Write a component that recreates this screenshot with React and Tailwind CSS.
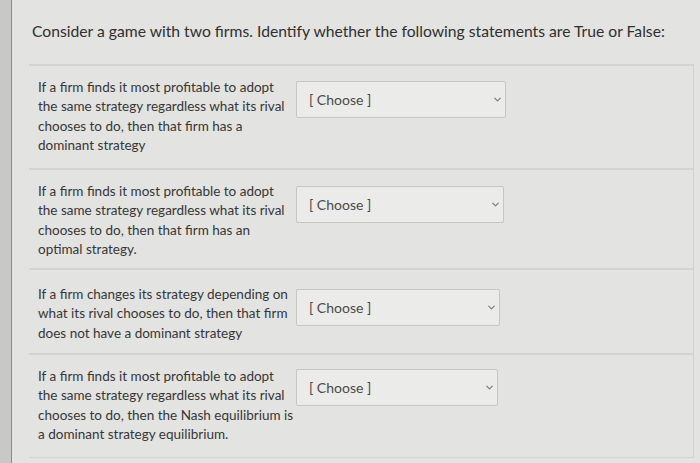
import React from 'react'
import { ChevronDown } from 'lucide-react'

const rows = [
  {
    lines: [
      'If a firm finds it most profitable to adopt',
      'the same strategy regardless what its rival',
      'chooses to do, then that firm has a',
      'dominant strategy',
    ],
    box: 'h-[104px] pt-[12px]',
    sel: 'mt-[3px] w-[210px]',
  },
  {
    lines: [
      'If a firm finds it most profitable to adopt',
      'the same strategy regardless what its rival',
      'chooses to do, then that firm has an',
      'optimal strategy.',
    ],
    box: 'h-[100px] pt-[12px]',
    sel: 'mt-[4px] w-[208px]',
  },
  {
    lines: [
      'If a firm changes its strategy depending on',
      'what its rival chooses to do, then that firm',
      'does not have a dominant strategy',
    ],
    box: 'h-[85px] pt-[15px]',
    sel: 'mt-[4px] w-[204px]',
  },
  {
    lines: [
      'If a firm finds it most profitable to adopt',
      'the same strategy regardless what its rival',
      'chooses to do, then the Nash equilibrium is',
      'a dominant strategy equilibrium.',
    ],
    box: 'flex-1 pt-[12px]',
    sel: 'mt-[2px] w-[202px]',
  },
]

const Select = ({ cls }) => {
  return (
    <div className={`h-[37px] ${cls} shrink-0 flex items-center justify-between rounded-[2px] border border-[#c6c6c4] bg-[#ebebe9] pl-[12px] pr-[2px]`}>
      <span className="text-[14px] text-[#4a4a4a]">[ Choose ]</span>
      <ChevronDown size={11} strokeWidth={2.6} className="text-[#7c7c7c]" />
    </div>
  )
}

export default function App() {
  return (
    <div className="w-[700px] h-[463px] flex bg-[#e3e3e1] overflow-hidden" style={{ fontFamily: 'Lato, "Open Sans", sans-serif' }}>
      <div className="w-[12px] shrink-0 bg-[#c8c8c6] border-r border-[#8c8c8a]"></div>

      <div className="flex-1 flex flex-col">
        <div className="pl-[20px] pt-[20px] h-[64px] shrink-0">
          <p className="text-[15.7px] text-[#2f2f2f]">
            Consider a game with two firms. Identify whether the following statements are True or False:
          </p>
        </div>

        <div className="ml-[17px] mr-[6px] flex-1 flex flex-col border-r border-b border-[#d2d2d0]">
          {rows.map((row, i) => (
            <div key={i} className={`flex items-start shrink-0 border-t-2 border-[#d3d3d1] pl-[9px] ${row.box}`}>
              <div className="w-[258px] shrink-0 text-[13.5px] leading-[19.3px] text-[#363636]">
                {row.lines.map((l, j) => (
                  <div key={j} className="whitespace-nowrap">{l}</div>
                ))}
              </div>
              <Select cls={row.sel} />
            </div>
          ))}
        </div>
        <div className="h-[5px] shrink-0"></div>
      </div>
    </div>
  )
}
